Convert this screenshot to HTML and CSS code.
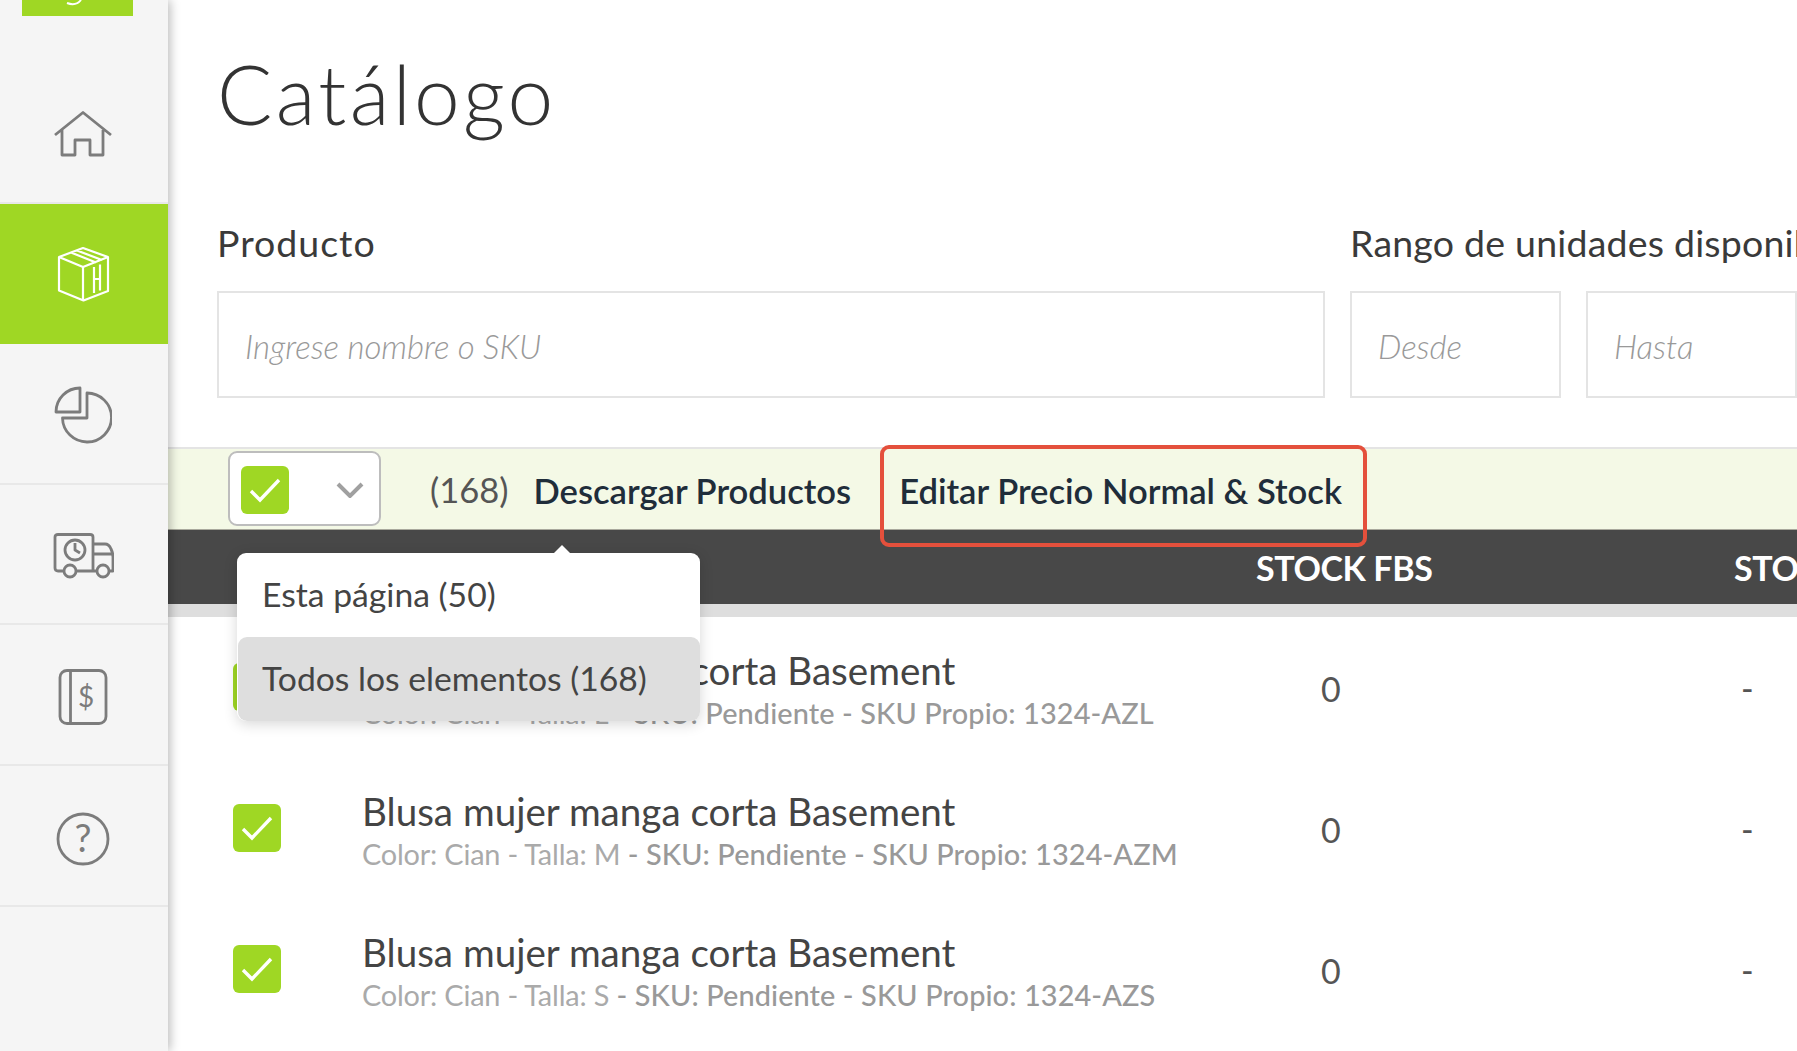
FILE: index.html
```html
<!DOCTYPE html>
<html lang="es">
<head>
<meta charset="utf-8">
<title>Catálogo</title>
<link rel="stylesheet" href="styles.css">
</head>
<body>
<div class="app">
  <aside class="sidebar">
    <div class="logo-wrap"><div class="logo"><svg class="logo-mark" width="20" height="6" viewBox="0 0 20 6"><path d="M1 3C6 5 11 5 15 0" fill="none" stroke="#fff" stroke-width="2"/></svg></div></div>
    <nav class="nav">
      <a class="nav-item">
        <svg class="icon" width="58" height="46" viewBox="0 0 58 46"><path d="M1 24L29 1.5L57 24M8 19V44H21V29H36V44H49V19"/></svg>
      </a>
      <a class="nav-item active">
        <svg class="icon icon-box" width="54" height="56" viewBox="-1 1 54 56"><path d="M26 2L51 11V45L26.500 54.500L2 44.500V11ZM2 11L26 21V54.500M26 21L51 11M14 6.500L39 16.500M20 4.500L45 14M37 21V47M43 18.500V44.500M37 33H43"/></svg>
      </a>
      <a class="nav-item">
        <svg class="icon" width="58" height="58" viewBox="0 0 58 58"><path d="M26 2A24 24 0 0 0 2 26H26ZM33 7A24.500 24.500 0 1 1 8.500 32H33Z"/></svg>
      </a>
      <a class="nav-item">
        <svg class="icon" width="62" height="46" viewBox="-1 0 62 46"><path d="M11 38H5Q2 38 2 35V4Q2 1.500 5 1.500H37Q40 1.500 40 4V38H23M40 11H52Q56 11 58 16Q60 20 60 24V38H56M44 38H40M40 21H59"/><circle cx="17" cy="38" r="6"/><circle cx="50" cy="38" r="6"/><circle cx="22" cy="17" r="10"/><path d="M22 10V17L27 20"/></svg>
      </a>
      <a class="nav-item">
        <svg class="icon" width="50" height="56" viewBox="0 0 50 56"><rect x="2" y="1.500" width="46" height="53" rx="7"/><path d="M12.500 1.500V54.500"/><text class="icon-char" x="28" y="38" text-anchor="middle" font-size="28">$</text></svg>
      </a>
      <a class="nav-item">
        <svg class="icon" width="54" height="58" viewBox="0 -4 54 58"><circle cx="27" cy="27" r="25"/><text class="icon-char" x="27" y="40" text-anchor="middle" font-size="38">?</text></svg>
      </a>
    </nav>
  </aside>

  <main class="main">
    <h1 class="title">Catálogo</h1>

    <section class="filters">
      <div class="field field-product">
        <label class="label">Producto</label>
        <input class="input" placeholder="Ingrese nombre o SKU">
      </div>
      <div class="field field-range">
        <label class="label">Rango de unidades disponibles</label>
        <div class="range">
          <input class="input" placeholder="Desde">
          <input class="input" placeholder="Hasta">
        </div>
      </div>
    </section>

    <section class="table">
      <div class="toolbar">
        <div class="select">
          <span class="check"><svg width="48" height="48" viewBox="0 0 48 48"><path d="M10 25L19 34L38 14"/></svg></span>
          <svg class="chevron" width="28" height="16" viewBox="0 0 28 16"><path d="M2 2L14 14L26 2"/></svg>
        </div>
        <span class="count">(168)</span>
        <a class="action">Descargar Productos</a>
        <a class="action action-edit">Editar Precio Normal &amp; Stock</a>
        <div class="highlight"></div>
        <div class="menu">
          <div class="menu-item">Esta página (50)</div>
          <div class="menu-item selected">Todos los elementos (168)</div>
        </div>
      </div>

      <div class="thead">
        <span class="th th-fbs">STOCK FBS</span>
        <span class="th">STOCK</span>
      </div>

      <div class="row">
        <span class="check row-check"><svg width="48" height="48" viewBox="0 0 48 48"><path d="M10 25L19 34L38 14"/></svg></span>
        <div class="product">
          <div class="name">Blusa mujer manga corta Basement</div>
          <div class="meta"><span class="meta-light">Color: Cian - Talla: L</span> - SKU: Pendiente - SKU Propio: 1324-AZL</div>
        </div>
        <span class="stock">0</span>
        <span class="dash">-</span>
      </div>
      <div class="row">
        <span class="check row-check"><svg width="48" height="48" viewBox="0 0 48 48"><path d="M10 25L19 34L38 14"/></svg></span>
        <div class="product">
          <div class="name">Blusa mujer manga corta Basement</div>
          <div class="meta"><span class="meta-light">Color: Cian - Talla: M</span> - SKU: Pendiente - SKU Propio: 1324-AZM</div>
        </div>
        <span class="stock">0</span>
        <span class="dash">-</span>
      </div>
      <div class="row">
        <span class="check row-check"><svg width="48" height="48" viewBox="0 0 48 48"><path d="M10 25L19 34L38 14"/></svg></span>
        <div class="product">
          <div class="name">Blusa mujer manga corta Basement</div>
          <div class="meta"><span class="meta-light">Color: Cian - Talla: S</span> - SKU: Pendiente - SKU Propio: 1324-AZS</div>
        </div>
        <span class="stock">0</span>
        <span class="dash">-</span>
      </div>
    </section>
  </main>
</div>
</body>
</html>
```
FILE: styles.css
```css
* { box-sizing: border-box; }
html, body { margin: 0; height: 100%; overflow: hidden; background: #fff; }
body { font-family: Lato, "Open Sans", sans-serif; color: #333; }
.app { display: flex; width: 1797px; height: 1051px; overflow: hidden; }

.sidebar {
  flex: 0 0 168px;
  background: #f5f5f5;
  box-shadow: 2px 0 10px rgba(0,0,0,.28);
  position: relative;
  z-index: 5;
}
.logo-wrap { height: 63px; padding-left: 22px; }
.logo { width: 111px; height: 16px; background: #9fd724; display: flex; justify-content: center; }
.logo-mark { display: block; margin-right: 4px; }
.nav { display: flex; flex-direction: column; }
.nav-item {
  height: 140.6px;
  display: flex;
  align-items: center;
  justify-content: center;
  padding-top: 4px;
  padding-right: 2px;
  border-bottom: 2px solid #e8e8e8;
}
.nav-item.active { background: #9fd724; border-bottom-color: #9fd724; }
.icon { fill: none; stroke: #7c7c7c; stroke-width: 2.8; stroke-linejoin: round; }
.active .icon { stroke: #fff; }
.icon-box { stroke-width: 2.2; }
.icon-char { fill: #7c7c7c; stroke: none; font-family: Lato, sans-serif; }

.main { flex: 1; min-width: 0; overflow: hidden; }
.title {
  margin: 0;
  padding: 43px 0 0 49px;
  height: 221px;
  font-size: 82px;
  line-height: 100px;
  font-weight: 300;
  letter-spacing: 3.300px;
  color: #333;
}

.filters { display: flex; padding-left: 49px; height: 226px; }
.field-product { flex: 0 0 1108px; margin-right: 25px; }
.field-range { flex: 1; min-width: 0; }
.label { display: block; height: 70px; font-size: 37.500px; line-height: 44px; color: #3a3a3a; white-space: nowrap; }
.field-product .label { letter-spacing: 1px; }
.field-range .label { letter-spacing: .2px; }
.input {
  display: block;
  width: 100%;
  height: 107px;
  padding: 2px 26px 0 26px;
  border: 2px solid #e4e4e4;
  background: #fff;
  border-radius: 0;
  outline: 0;
  font-family: Lato, sans-serif;
  font-size: 33px;
  font-style: italic;
  font-weight: 300;
}
.input::placeholder { color: #999; opacity: 1; }
.range { display: flex; gap: 25px; }
.range .input { flex: 0 0 211px; width: 211px; }

.toolbar {
  position: relative;
  z-index: 3;
  height: 83px;
  display: flex;
  align-items: center;
  padding-left: 60px;
  background: #f4f9e6;
  border-top: 2px solid #e4e4e4;
  border-bottom: 1px solid #a9a99d;
}
.select {
  width: 153px;
  height: 75px;
  flex: none;
  display: flex;
  align-items: center;
  justify-content: space-between;
  padding: 3px 15px 0 11px;
  margin-top: -2px;
  background: #fff;
  border: 2px solid #bdbdbd;
  border-radius: 9px;
}
.check { flex: none; display: block; width: 48px; height: 48px; background: #9fd724; border-radius: 6px; }
.check svg { display: block; fill: none; stroke: #fff; stroke-width: 3.4; }
.chevron { fill: none; stroke: #a0a0a0; stroke-width: 4; }
.count { margin-left: 49px; font-size: 34.500px; color: #555; }
.action { font-size: 34.600px; font-weight: 600; color: #1f2d3a; white-space: nowrap; margin-top: 3px; }
.count + .action { margin-left: 25px; }
.action-edit { margin-left: 48px; }
.highlight {
  position: absolute;
  left: 712px;
  top: -4px;
  width: 487px;
  height: 102px;
  border: 4px solid #e4503c;
  border-radius: 9px;
}
.menu {
  position: absolute;
  left: 69px;
  top: 104px;
  width: 463px;
  height: 168px;
  background: #fff;
  border-radius: 9px;
  box-shadow: 0 3px 14px rgba(0,0,0,.16);
  z-index: 4;
}
.menu::before {
  content: "";
  position: absolute;
  left: 316px;
  top: -8px;
  border-left: 9px solid transparent;
  border-right: 9px solid transparent;
  border-bottom: 9px solid #fff;
}
.menu-item { height: 84px; padding-left: 25px; font-size: 33.700px; line-height: 83px; color: #444; }
.menu-item.selected { background: #dedede; border-radius: 9px; margin-left: 1px; padding-left: 24px; }

.thead {
  display: grid;
  grid-template-columns: 478px 1fr;
  height: 87px;
  padding: 0 0 0 1088px;
  background: #484848;
  border-bottom: 13px solid #dedede;
  align-items: center;
  overflow: hidden;
}
.th { font-size: 34px; font-weight: 700; color: #fff; white-space: nowrap; letter-spacing: -.4px; }

.row {
  display: grid;
  grid-template-columns: 129px 959px 420px 1fr;
  height: 141px;
  padding-left: 65px;
  align-items: center;
}
.row-check { margin-top: -2px; }
.product { min-width: 0; margin-top: 4px; }
.name { margin: -1px 0 1px; font-size: 38.600px; line-height: 46px; color: #444; white-space: nowrap; }
.meta { font-size: 28.900px; line-height: 38px; letter-spacing: .1px; color: #999; font-weight: 500; white-space: nowrap; }
.meta-light { font-weight: 400; color: #aaa; letter-spacing: -.2px; }
.stock { margin-top: 2px; font-size: 34px; color: #555; }
.dash { font-size: 34px; color: #555; }
```
